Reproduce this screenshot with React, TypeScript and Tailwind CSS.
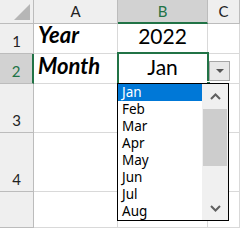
const MONTHS = ["Jan", "Feb", "Mar", "Apr", "May", "Jun", "Jul", "Aug"];

const head = "flex items-center justify-center bg-[#efefef] border-r border-b border-[#bcbcbc] text-[15px] text-[#222]";
const rowHead = "flex items-end justify-center pb-[1px] bg-[#efefef] border-r border-b border-[#bcbcbc] text-[15px] text-[#222]";
const cell = "flex items-end border-r border-b border-[#d9d9d9]";

export default function App() {
  return (
    <div className="relative h-[228px] w-[240px] overflow-hidden bg-white font-['Lato',sans-serif]">
      <div className="grid h-full grid-cols-[34px_84px_90px_1fr] grid-rows-[24px_30px_30px_49px_59px_1fr]">
        {/* corner */}
        <div className="relative bg-[#efefef] border-r border-b border-[#bcbcbc]">
          <div className="absolute bottom-[3px] right-[3px] h-0 w-0 [border-bottom:16px_solid_#b6b6b6] [border-left:16px_solid_transparent]" />
        </div>
        <div className={head}>A</div>
        <div className="flex items-center justify-center bg-[#d2d2d2] border-r border-[#bcbcbc] border-b-2 border-b-[#217346] text-[15px] text-[#217346]">B</div>
        <div className={head}>C</div>

        <div className={rowHead}>1</div>
        <div className={`${cell} pl-[4px] pb-[2px] text-[22px] font-bold italic text-black`}>Year</div>
        <div className={`${cell} justify-center pb-[2px] text-[21px] text-black`}>2022</div>
        <div className={cell} />

        <div className="flex items-end justify-center pb-[1px] bg-[#d2d2d2] border-b border-[#bcbcbc] border-r-2 border-r-[#217346] text-[15px] text-[#217346]">2</div>
        <div className={`${cell} pl-[4px] pb-[1px] text-[22px] font-bold italic text-black`}>Month</div>
        <div className={`${cell} justify-center pb-[1px] text-[21px] text-black`}>Jan</div>
        <div className={cell} />

        <div className={rowHead}>3</div>
        <div className={cell} />
        <div className={cell} />
        <div className={cell} />

        <div className={rowHead}>4</div>
        <div className={cell} />
        <div className={cell} />
        <div className={cell} />

        <div className={rowHead} />
        <div className={cell} />
        <div className={cell} />
        <div className={cell} />
      </div>

      {/* active cell border */}
      <div className="absolute left-[117px] top-[52px] h-[33px] w-[92px] border-2 border-[#217346]" />
      <div className="absolute left-[206px] top-[81px] h-[5px] w-[5px] bg-[#217346] border border-white" />

      {/* dropdown button */}
      <div className="absolute left-[209px] top-[61px] flex h-[20px] w-[21px] items-center justify-center border border-[#a6a6a6] bg-[#e8e8e8]">
        <div className="h-0 w-0 border-x-[4px] border-t-[4px] border-x-transparent border-t-[#555]" />
      </div>

      {/* dropdown list */}
      <div className="absolute left-[117px] top-[83px] flex h-[138px] w-[112px] border border-black bg-white font-['Noto_Sans',sans-serif]">
        <div className="flex flex-1 flex-col">
          {MONTHS.map((m, i) => (
            <div
              key={m}
              className={`flex h-[17px] items-center pl-[4px] text-[13.5px] leading-none ${i === 0 ? "bg-[#0078d7] text-white" : "text-black"}`}
            >
              {m}
            </div>
          ))}
        </div>
        <div className="flex w-[26px] flex-col bg-[#f0f0f0]">
          <div className="flex h-[25px] items-center justify-center">
            <svg width="11" height="7" viewBox="0 0 11 7">
              <path d="M1 6 L5.5 1.5 L10 6" fill="none" stroke="#606060" strokeWidth="2" />
            </svg>
          </div>
          <div className="mx-[1px] h-[57px] bg-[#cdcdcd]" />
          <div className="flex-1" />
          <div className="flex h-[24px] items-center justify-center">
            <svg width="11" height="7" viewBox="0 0 11 7">
              <path d="M1 1 L5.5 5.5 L10 1" fill="none" stroke="#606060" strokeWidth="2" />
            </svg>
          </div>
        </div>
      </div>
    </div>
  );
}
